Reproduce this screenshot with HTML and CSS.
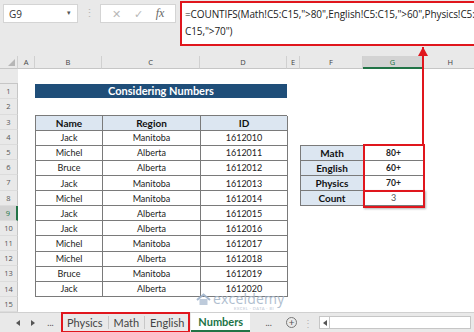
FILE: index.html
```html
<!DOCTYPE html>
<html lang="en">
<head>
  <meta charset="UTF-8">
  <title>COUNTIFS - Considering Numbers</title>
  <link rel="stylesheet" href="styles.css">
</head>
<body>
  <div class="app">

    <!-- formula bar -->
    <div class="formula-bar">
      <div class="name-box">G9<span class="drop">&#9662;</span></div>
      <div class="grip">&#8942;</div>
      <div class="fn-box">
        <span class="fn-x">&#10005;</span>
        <span class="fn-ok">&#10003;</span>
        <span class="fn-fx">fx</span>
      </div>
      <div class="formula">=COUNTIFS(Math!C5:C15,"&gt;80",English!C5:C15,"&gt;60",Physics!C5:<br>C15,"&gt;70")</div>
    </div>
    <div class="bar-gap"></div>

    <!-- sheet -->
    <div class="sheet">
      <div class="corner"><span class="tri"></span></div>
      <div class="col-head">A</div>
      <div class="col-head">B</div>
      <div class="col-head">C</div>
      <div class="col-head">D</div>
      <div class="col-head">E</div>
      <div class="col-head">F</div>
      <div class="col-head active">G</div>
      <div class="col-head">H</div>
      <div class="col-head last"></div>

      <div class="row-head">1</div>
      <div class="row-head">2</div>
      <div class="row-head">3</div>
      <div class="row-head">4</div>
      <div class="row-head">5</div>
      <div class="row-head">6</div>
      <div class="row-head">7</div>
      <div class="row-head">8</div>
      <div class="row-head active">9</div>
      <div class="row-head">10</div>
      <div class="row-head">11</div>
      <div class="row-head">12</div>
      <div class="row-head">13</div>
      <div class="row-head">14</div>
      <div class="row-head">15</div>
      <div class="row-head">16</div>

      <div class="title">Considering Numbers</div>

      <div class="data">
        <div class="th">Name</div><div class="th">Region</div><div class="th">ID</div>
        <div class="td">Jack</div><div class="td">Manitoba</div><div class="td">1612010</div>
        <div class="td">Michel</div><div class="td">Alberta</div><div class="td">1612011</div>
        <div class="td">Bruce</div><div class="td">Alberta</div><div class="td">1612012</div>
        <div class="td">Jack</div><div class="td">Manitoba</div><div class="td">1612013</div>
        <div class="td">Michel</div><div class="td">Manitoba</div><div class="td">1612014</div>
        <div class="td">Jack</div><div class="td">Alberta</div><div class="td">1612015</div>
        <div class="td">Jack</div><div class="td">Alberta</div><div class="td">1612016</div>
        <div class="td">Michel</div><div class="td">Manitoba</div><div class="td">1612017</div>
        <div class="td">Michel</div><div class="td">Alberta</div><div class="td">1612018</div>
        <div class="td">Bruce</div><div class="td">Manitoba</div><div class="td">1612019</div>
        <div class="td">Jack</div><div class="td">Alberta</div><div class="td">1612020</div>
      </div>

      <div class="crit">
        <div class="th">Math</div><div class="td bold">80+</div>
        <div class="th">English</div><div class="td bold">60+</div>
        <div class="th">Physics</div><div class="td bold">70+</div>
        <div class="th">Count</div><div class="td count">3</div>
        <div class="mark-range"></div>
        <div class="mark-count"></div>
      </div>

      <div class="watermark">
        <svg class="logo" width="15" height="13" viewBox="0 0 15 13">
          <path d="M1 7 L7.5 1.5 L14 7" fill="none" stroke="#9fb3cc" stroke-width="2"/>
          <path d="M3.5 6 V12 H11.5 V6" fill="#b7c6d8"/>
        </svg>
        <span class="wm-text">exceldemy</span>
        <span class="wm-sub">EXCEL · DATA · BI</span>
      </div>
    </div>

    <!-- sheet tabs -->
    <div class="tabs">
      <span class="nav"><i class="tri-left"></i></span>
      <span class="nav"><i class="tri-right"></i></span>
      <span class="nav dots">...</span>
      <div class="tab-group">
        <span class="tab">Physics</span>
        <span class="tab">Math</span>
        <span class="tab">English</span>
      </div>
      <span class="tab current">Numbers</span>
      <span class="nav dots more">...</span>
      <span class="add">+</span>
      <span class="grip small">&#8942;</span>
      <div class="scroll"><span class="scroll-left"><i class="tri-left"></i></span></div>
    </div>

    <!-- arrow from the range up to the formula -->
    <div class="arrow"></div>
  </div>
</body>
</html>
```

FILE: styles.css
```css
* {
  box-sizing: border-box;
}

body {
  margin: 0;
  font-family: 'Open Sans', 'Noto Sans', sans-serif;
  background: #fff;
}

.app {
  position: relative;
  width: 474px;
  height: 332px;
  overflow: hidden;
  display: grid;
  grid-template-rows: 46px 10px 256px 20px;
  background: #fff;
}

/* Formula bar */
.formula-bar {
  background: #e9e9e9;
  display: flex;
  align-items: flex-start;
  padding: 4px 2px 0 3px;
}

.name-box {
  width: 75px;
  height: 19px;
  background: #fff;
  border: 1px solid #d4d4d4;
  font-size: 10px;
  color: #333;
  padding: 2px 0 0 5px;
  position: relative;
}

.name-box .drop {
  position: absolute;
  right: 6px;
  top: 3px;
  font-size: 7px;
  color: #555;
}

.grip {
  width: 22px;
  text-align: center;
  color: #b5b5b5;
  font-size: 11px;
  line-height: 17px;
}

.fn-box {
  width: 76px;
  height: 19px;
  background: #fff;
  border: 1px solid #d4d4d4;
  display: flex;
  align-items: center;
  justify-content: space-around;
  color: #b8b8b8;
  font-size: 11px;
  padding: 0 4px;
}

.fn-fx {
  font-family: 'Liberation Serif', serif;
  font-style: italic;
  color: #666;
  font-size: 12px;
}

.formula {
  margin: -3px 0 0 4px;
  flex: 1;
  height: 45px;
  background: #fff;
  border: 2.5px solid #e0161d;
  font-size: 10px;
  line-height: 17px;
  color: #222;
  padding: 3px 0 0 3px;
  white-space: nowrap;
  letter-spacing: -0.1px;
}

.bar-gap {
  background: #e9e9e9;
}

/* Sheet grid */
.sheet {
  position: relative;
  overflow: hidden;
  display: grid;
  grid-template-columns: 18px 17px 67px 98px 87px 13px 63px 60px 1fr;
  grid-template-rows: 13px repeat(16, 15.2px);
  font-family: Lato, 'Liberation Sans', sans-serif;
  font-size: 9px;
  color: #222;
}

.corner {
  background: #e9e9e9;
  border-right: 1px solid #d0d0d0;
  border-bottom: 1px solid #c6c6c6;
  position: relative;
}

.tri {
  position: absolute;
  right: 2px;
  bottom: 2px;
  border-left: 7px solid transparent;
  border-bottom: 7px solid #b6b6b6;
}

.col-head {
  background: #e9e9e9;
  border-right: 1px solid #d0d0d0;
  border-bottom: 1px solid #c6c6c6;
  text-align: center;
  font-family: 'Open Sans', sans-serif;
  font-size: 7.5px;
  line-height: 12px;
  color: #444;
}

.col-head.active {
  background: #d3d3d3;
  border-bottom: 2px solid #217346;
  color: #217346;
}

.col-head.last {
  border-right: none;
}

.row-head {
  grid-column: 1;
  background: #e9e9e9;
  border-right: 1px solid #c6c6c6;
  border-bottom: 1px solid #dcdcdc;
  text-align: center;
  font-family: 'Open Sans', sans-serif;
  font-size: 7.5px;
  line-height: 15px;
  color: #555;
}

.row-head.active {
  background: #d3d3d3;
  border-right: 2px solid #217346;
  color: #217346;
}

.title {
  grid-column: 3 / 6;
  grid-row: 3;
  margin: 0 0 1px;
  background: #1f4e79;
  color: #fff;
  font-weight: bold;
  font-size: 11px;
  text-align: center;
  line-height: 14px;
}

.data {
  grid-column: 3 / 6;
  grid-row: 5 / 17;
  display: grid;
  grid-template-columns: 67px 98px 87px;
  grid-template-rows: repeat(12, 1fr);
  border-top: 1px solid #7a7a7a;
  border-left: 1px solid #7a7a7a;
}

.th,
.td {
  border-right: 1px solid #7a7a7a;
  border-bottom: 1px solid #7a7a7a;
  text-align: center;
  display: flex;
  align-items: center;
  justify-content: center;
}

.th {
  background: #dce6f1;
  font-weight: bold;
  font-size: 10px;
  color: #111;
}

.td {
  background: #fff;
}

.td.bold {
  font-weight: bold;
  font-size: 8.5px;
}

.td.count {
  color: #555;
}

.crit {
  grid-column: 7 / 9;
  grid-row: 7 / 11;
  display: grid;
  grid-template-columns: 63px 60px;
  grid-template-rows: repeat(4, 1fr);
  border-top: 1px solid #7a7a7a;
  border-left: 1px solid #7a7a7a;
  position: relative;
}

.mark-range {
  position: absolute;
  left: 62px;
  top: -2px;
  width: 62px;
  height: 46px;
  border: 2px solid #e0161d;
  border-bottom: none;
}

.mark-count {
  position: absolute;
  left: 62px;
  top: 44px;
  width: 62px;
  height: 18px;
  border: 2.5px solid #e0161d;
  box-shadow: 1px 1px 2px rgba(0, 0, 0, 0.3);
}

.arrow {
  position: absolute;
  left: 422px;
  top: 47px;
  width: 2px;
  height: 97px;
  background: #e0161d;
}

.arrow::before {
  content: "";
  position: absolute;
  left: -4px;
  top: 0;
  border-left: 5px solid transparent;
  border-right: 5px solid transparent;
  border-bottom: 9px solid #e0161d;
}

/* Sheet tabs */
.tabs {
  background: #e9e9e9;
  border-top: 1px solid #d0d0d0;
  display: flex;
  align-items: center;
  font-family: Lato, 'Liberation Sans', sans-serif;
  font-size: 11px;
  color: #444;
  padding-left: 10px;
}

.nav {
  width: 15px;
  display: flex;
  justify-content: center;
  color: #555;
}

.tri-left,
.tri-right {
  display: block;
  border-top: 3px solid transparent;
  border-bottom: 3px solid transparent;
}

.tri-left {
  border-right: 4px solid #555;
}

.tri-right {
  border-left: 4px solid #555;
}

.nav.dots {
  font-size: 9px;
  width: 21px;
}

.tab-group {
  display: flex;
  margin-left: 1px;
  outline: 2.5px solid #e0161d;
  outline-offset: -1px;
  height: 19px;
  align-items: center;
}

.tab {
  padding: 0 5px;
  border-right: 1px solid #c8c8c8;
  line-height: 13px;
}

.tab-group .tab:last-child {
  border-right: none;
}

.tab.current {
  background: #fff;
  color: #217346;
  font-weight: bold;
  height: 19px;
  line-height: 17px;
  border-right: none;
  border-bottom: 2px solid #217346;
  margin-left: 2px;
  padding: 0 7px;
}

.nav.more {
  margin-left: 8px;
}

.add {
  width: 11px;
  height: 11px;
  border: 1px solid #777;
  border-radius: 50%;
  font-size: 10px;
  line-height: 8px;
  text-align: center;
  margin-left: 7px;
  color: #555;
}

.grip.small {
  width: 22px;
  line-height: 12px;
  font-size: 10px;
}

.scroll {
  flex: 1;
  height: 13px;
  margin-right: 8px;
  background: #fff;
  border: 1px solid #c6c6c6;
  display: flex;
  align-items: center;
}

.scroll-left {
  width: 10px;
  height: 100%;
  border-right: 1px solid #c6c6c6;
  display: flex;
  align-items: center;
  justify-content: center;
}

/* watermark */
.watermark {
  position: absolute;
  left: 196px;
  top: 236px;
  display: flex;
  align-items: center;
  line-height: 14px;
  opacity: 0.9;
}

.wm-text {
  font-family: 'Open Sans', sans-serif;
  font-size: 14px;
  color: #a7b7ca;
  margin-left: 2px;
  letter-spacing: 0.2px;
}

.wm-sub {
  position: absolute;
  left: 38px;
  top: 14px;
  font-size: 4px;
  line-height: 5px;
  color: #b5c1cf;
  letter-spacing: 0.5px;
}
```
